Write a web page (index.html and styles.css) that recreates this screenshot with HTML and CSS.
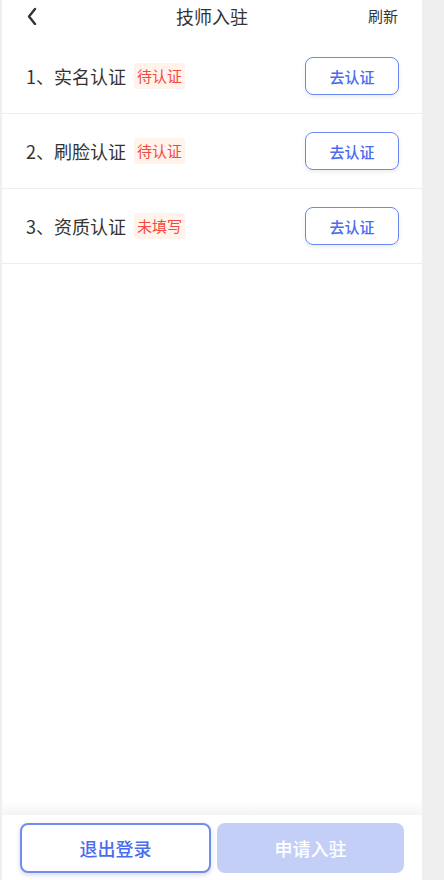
FILE: index.html
```html
<!DOCTYPE html>
<html lang="zh-CN">
<head>
    <meta charset="UTF-8">
    <meta name="viewport" content="width=device-width, initial-scale=1.0">
    <title>技师入驻</title>
    <link rel="stylesheet" href="styles.css">
</head>
<body>
    <div class="page">
        <!-- Header -->
        <header class="header">
            <span class="back">
                <svg width="12" height="18" viewBox="0 0 12 18">
                    <path d="M9 2 L3 9.5 L9 17" fill="none" stroke="#333" stroke-width="2.4" stroke-linecap="round" stroke-linejoin="round"/>
                </svg>
            </span>
            <h1 class="title">技师入驻</h1>
            <span class="refresh">刷新</span>
        </header>

        <!-- Steps -->
        <div class="steps">
            <div class="step">
                <div class="step-info">
                    <span class="step-name">1、实名认证</span>
                    <span class="tag">待认证</span>
                </div>
                <button class="btn-verify">去认证</button>
            </div>
            <div class="step">
                <div class="step-info">
                    <span class="step-name">2、刷脸认证</span>
                    <span class="tag">待认证</span>
                </div>
                <button class="btn-verify">去认证</button>
            </div>
            <div class="step">
                <div class="step-info">
                    <span class="step-name">3、资质认证</span>
                    <span class="tag">未填写</span>
                </div>
                <button class="btn-verify">去认证</button>
            </div>
        </div>

        <div class="spacer"></div>

        <!-- Footer buttons -->
        <div class="footer-shade"></div>
        <footer class="footer">
            <button class="btn-logout">退出登录</button>
            <button class="btn-apply">申请入驻</button>
        </footer>
    </div>
</body>
</html>
```

FILE: styles.css
```css
body {
    margin: 0;
    padding: 0;
    background-color: #efefef;
    font-family: "Noto Sans CJK SC", "Noto Sans", sans-serif;
    color: #333;
}

.page {
    width: 420px;
    margin-left: 2px;
    min-height: 880px;
    background-color: #fff;
    display: flex;
    flex-direction: column;
}

/* Header */
.header {
    height: 31px;
    margin-bottom: 8px;
    display: flex;
    align-items: center;
    justify-content: space-between;
    padding: 0 24px 0 24px;
    position: relative;
}

.back {
    display: flex;
    align-items: center;
    width: 12px;
    height: 18px;
}

.title {
    position: absolute;
    left: 0;
    right: 0;
    text-align: center;
    margin: 0;
    font-size: 18px;
    font-weight: 400;
    color: #333;
    pointer-events: none;
}

.refresh {
    font-size: 15px;
    color: #333;
}

/* Steps */
.step {
    height: 74px;
    border-bottom: 1px solid #eeeeee;
    display: flex;
    align-items: center;
    justify-content: space-between;
    padding: 0 23px 0 24px;
}

.step-info {
    display: flex;
    align-items: center;
    gap: 8px;
}

.step-name {
    font-size: 18px;
    color: #333;
}

.tag {
    font-size: 15px;
    color: #f4493e;
    background-color: #fff3ec;
    border-radius: 3px;
    padding: 0 3px;
    height: 26px;
    line-height: 26px;
}

.btn-verify {
    width: 94px;
    height: 38px;
    border: 1.5px solid #6b89f2;
    border-radius: 8px;
    background-color: #fff;
    color: #4a6cf0;
    font-family: inherit;
    font-size: 15px;
    font-weight: 500;
    box-shadow: 0 2px 4px rgba(0, 0, 0, 0.08);
}

.spacer {
    flex: 1;
}

/* Footer */
.footer-shade {
    height: 14px;
    background: linear-gradient(to bottom, #ffffff, #f4f4f4);
}

.footer {
    display: flex;
    gap: 6px;
    padding: 8px 18px 7px 18px;
}

.footer button {
    flex: 1 1 0;
    height: 50px;
    border-radius: 8px;
    font-family: inherit;
    font-size: 18px;
    font-weight: 500;
}

.btn-logout {
    background-color: #fff;
    border: 2px solid #6f8cf3;
    color: #4a6cf0;
    box-shadow: 0 2px 5px rgba(0, 0, 0, 0.15);
}

.btn-apply {
    background-color: #c4cff8;
    border: none;
    color: #fff;
}
```
